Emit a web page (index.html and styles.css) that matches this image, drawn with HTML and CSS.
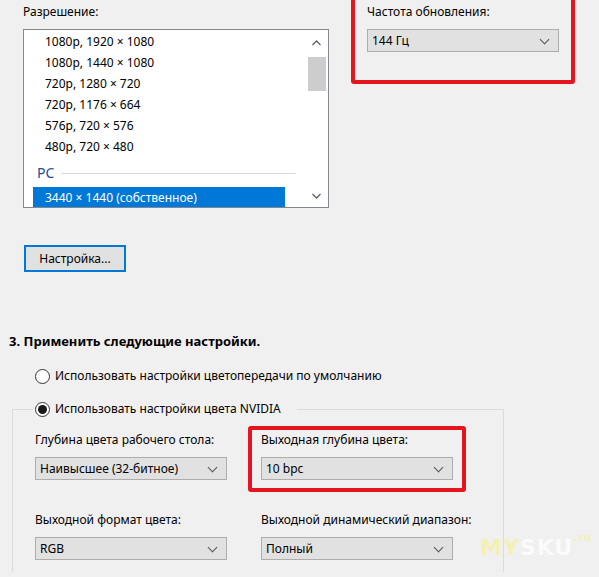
FILE: index.html
```html
<!DOCTYPE html>
<html lang="ru">
<head>
    <meta charset="UTF-8">
    <link rel="stylesheet" href="styles.css">
    <title>Изменение разрешения</title>
</head>
<body>
    <div class="top">
        <div class="res">
            <div class="lbl">Разрешение:</div>
            <div class="listbox">
                <div class="items">
                    <div class="item">1080p, 1920 × 1080</div>
                    <div class="item">1080p, 1440 × 1080</div>
                    <div class="item">720p, 1280 × 720</div>
                    <div class="item">720p, 1176 × 664</div>
                    <div class="item">576p, 720 × 576</div>
                    <div class="item">480p, 720 × 480</div>
                    <div class="group">PC<span class="rule"></span></div>
                    <div class="item sel">3440 × 1440 (собственное)</div>
                </div>
                <div class="scroll">
                    <svg class="arr" width="9" height="6" viewBox="0 0 9 6"><path d="M0.5 5 L4.5 1 L8.5 5" fill="none" stroke="#606060" stroke-width="1.3"/></svg>
                    <div class="thumb"></div>
                    <div class="spacer"></div>
                    <svg class="arr down" width="9" height="6" viewBox="0 0 9 6"><path d="M0.5 1 L4.5 5 L8.5 1" fill="none" stroke="#606060" stroke-width="1.3"/></svg>
                </div>
            </div>
            <button class="btn">Настройка...</button>
        </div>
        <div class="field hl rate">
            <div class="lbl">Частота обновления:</div>
            <div class="select">144 Гц<span class="chev"></span></div>
        </div>
    </div>

    <h3 class="step">3. Применить следующие настройки.</h3>
    <div class="opt"><span class="radio"></span>Использовать настройки цветопередачи по умолчанию</div>

    <fieldset class="grp">
        <legend class="opt"><span class="radio on"></span>Использовать настройки цвета NVIDIA</legend>
        <div class="row">
            <div class="field">
                <div class="lbl">Глубина цвета рабочего стола:</div>
                <div class="select">Наивысшее (32-битное)<span class="chev"></span></div>
            </div>
            <div class="field hl">
                <div class="lbl">Выходная глубина цвета:</div>
                <div class="select">10 bpc<span class="chev"></span></div>
            </div>
        </div>
        <div class="row">
            <div class="field">
                <div class="lbl">Выходной формат цвета:</div>
                <div class="select">RGB<span class="chev"></span></div>
            </div>
            <div class="field">
                <div class="lbl">Выходной динамический диапазон:</div>
                <div class="select">Полный<span class="chev"></span></div>
            </div>
        </div>
    </fieldset>

    <div class="mark"><span class="my">MY</span>SKU<span class="ru">.ru</span></div>
</body>
</html>
```

FILE: styles.css
```css
body{
    margin: 0;
    background: #f0f0f0;
    font-family: "Noto Sans", "Liberation Sans", sans-serif;
    font-size: 12px;
    line-height: 16px;
    color: #000;
    overflow: hidden;
    position: relative;
    height: 577px;
}
.top{
    display: flex;
    align-items: flex-start;
    padding-left: 23px;
}
.lbl{
    height: 16px;
    white-space: nowrap;
}
.res .lbl{
    padding-top: 4px;
}
.listbox{
    margin-top: 9px;
    width: 306px;
    height: 179px;
    box-sizing: border-box;
    border: 1px solid #828790;
    background: #fff;
    display: flex;
    overflow: hidden;
}
.items{
    flex: 1;
    padding-top: 1px;
}
.item{
    height: 21px;
    line-height: 21px;
    padding-left: 21px;
    white-space: nowrap;
}
.group{
    display: flex;
    align-items: center;
    height: 30px;
    padding-left: 13px;
    padding-top: 2px;
    box-sizing: border-box;
    font-size: 14px;
    color: #1e4e9a;
}
.rule{
    flex: 1;
    height: 1px;
    background: #d6dde4;
    margin: 0 11px 0 7px;
}
.item.sel{
    margin-left: 9px;
    width: 252px;
    padding-left: 12px;
    box-sizing: border-box;
    background: #0078d7;
    color: #fff;
}
.scroll{
    width: 19px;
    margin-right: 2px;
    display: flex;
    flex-direction: column;
    align-items: center;
}
.arr{
    margin: 10px 0;
}
.arr.down{
    margin-bottom: 8px;
}
.thumb{
    width: 18px;
    height: 34px;
    background: #cdcdcd;
    margin-top: 1px;
}
.spacer{
    flex: 1;
}
.btn{
    display: block;
    margin: 37px 0 0 1px;
    width: 102px;
    height: 27px;
    border: 2px solid #0078d7;
    background: #e1e1e1;
    font: inherit;
    color: #000;
    padding: 0;
}
.field{
    border: 4px solid transparent;
    border-radius: 3px;
    padding: 2px 9px 8px;
}
.hl{
    border-color: #e5141d;
}
.rate{
    margin: -4px 0 0 22px;
    padding: 4px 12px 28px;
    width: 192px;
}
.select{
    margin-top: 9px;
    width: 192px;
    height: 23px;
    box-sizing: border-box;
    border: 1px solid #adadad;
    background: #e1e1e1;
    padding-left: 4px;
    line-height: 21px;
    position: relative;
    white-space: nowrap;
}
.chev{
    position: absolute;
    right: 10px;
    top: 6px;
    width: 6px;
    height: 6px;
    border-right: 1px solid #555;
    border-bottom: 1px solid #555;
    transform: rotate(45deg);
}
.step{
    margin: 61px 0 0 9px;
    font-size: 13px;
    line-height: 16px;
    font-weight: bold;
}
.opt{
    display: flex;
    align-items: center;
    height: 16px;
    margin: 19px 0 0 35px;
    white-space: nowrap;
}
.radio{
    width: 15px;
    height: 15px;
    border: 1px solid #333;
    border-radius: 50%;
    background: #fff;
    margin-right: 5px;
    box-sizing: border-box;
    position: relative;
}
.radio.on::after{
    content: "";
    position: absolute;
    left: 2px;
    top: 2px;
    width: 9px;
    height: 9px;
    border-radius: 50%;
    background: #1a1a1a;
}
.grp{
    margin: 17px 0 0 12px;
    width: 492px;
    box-sizing: border-box;
    border: 1px solid #dcdcdc;
    border-bottom: none;
    padding: 9px 0 0 9px;
}
.grp legend.opt{
    margin: 0 0 0 11px;
    padding: 0 16px 0 2px;
}
.row{
    display: flex;
    gap: 8px;
}
.row + .row{
    margin-top: 14px;
}
.mark{
    position: absolute;
    left: 480px;
    top: 526px;
    font-family: "DejaVu Sans", sans-serif;
    font-weight: bold;
    font-size: 22px;
    line-height: 24px;
    color: rgba(255,255,255,0.75);
    letter-spacing: 1px;
    white-space: nowrap;
}
.mark .my{
    color: rgba(245,240,150,0.7);
}
.mark .ru{
    font-size: 10px;
    vertical-align: 14px;
    color: rgba(245,240,150,0.7);
}
```
